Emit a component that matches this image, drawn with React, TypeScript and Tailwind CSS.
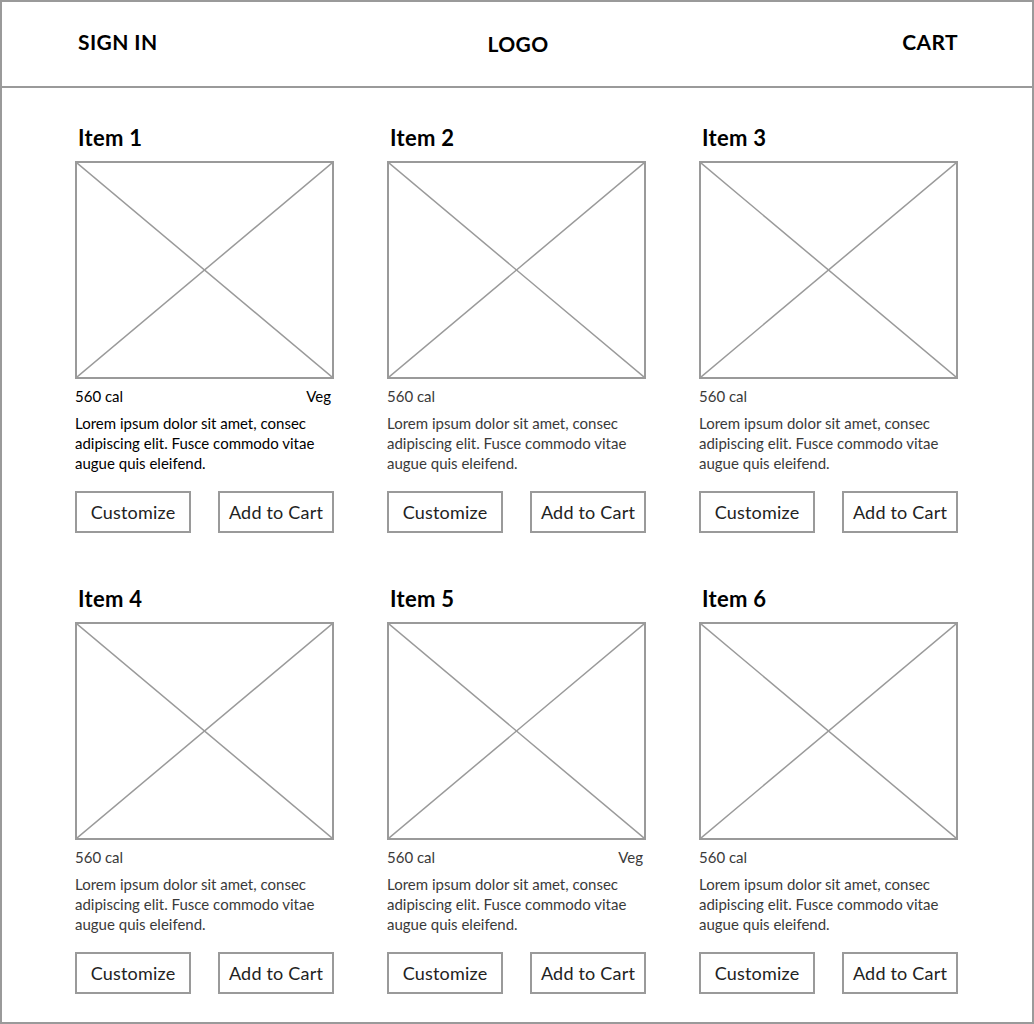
const items = [
  { name: "Item 1", veg: true, dark: true },
  { name: "Item 2", veg: false, dark: false },
  { name: "Item 3", veg: false, dark: false },
  { name: "Item 4", veg: false, dark: false },
  { name: "Item 5", veg: true, dark: false },
  { name: "Item 6", veg: false, dark: false },
];

const Placeholder = () => (
  <div className="relative h-[218px] w-[259px] border-2 border-[#9a9a9a]">
    <svg
      className="absolute inset-0 h-full w-full"
      viewBox="0 0 255 214"
      preserveAspectRatio="none"
    >
      <line x1="0" y1="0" x2="255" y2="214" stroke="#9a9a9a" strokeWidth="1.5" />
      <line x1="255" y1="0" x2="0" y2="214" stroke="#9a9a9a" strokeWidth="1.5" />
    </svg>
  </div>
);

const App = () => {
  return (
    <div
      className="h-[1024px] w-[1034px] border-2 border-[#9a9a9a] bg-white text-black"
      style={{ fontFamily: "Lato, 'Open Sans', sans-serif" }}
    >
      <header className="grid h-[86px] grid-cols-3 items-center border-b-2 border-[#9a9a9a] pb-[4px] pl-[76px] pr-[74px]">
        <span className="text-[21px] font-bold tracking-[0.4px]">SIGN IN</span>
        <span className="mt-[4px] text-center text-[21px] font-bold tracking-[0.4px]">LOGO</span>
        <span className="text-right text-[21px] font-bold tracking-[0.4px]">CART</span>
      </header>

      <div className="grid grid-cols-[259px_259px_259px] gap-x-[53px] gap-y-[52px] pl-[73px] pt-[36px]">
        {items.map((item) => (
          <div key={item.name} className="flex flex-col">
            <h3 className="mb-[9px] pl-[3px] text-[22px] leading-[28px] font-bold tracking-[0.3px]">
              {item.name}
            </h3>
            <Placeholder />
            <div
              className={`mt-[7px] flex justify-between text-[15px] leading-[20px] ${
                item.dark ? "text-black" : "text-[#3a3a3a]"
              }`}
            >
              <span>560 cal</span>
              {item.veg && <span className="pr-[3px]">Veg</span>}
            </div>
            <p
              className={`mt-[7px] text-[15px] leading-[20px] ${
                item.dark ? "text-black" : "text-[#3a3a3a]"
              }`}
            >
              Lorem ipsum dolor sit amet, consec adipiscing elit. Fusce commodo vitae augue
              quis eleifend.
            </p>
            <div className="mt-[18px] flex justify-between">
              <button className="h-[42px] w-[116px] border-2 border-[#9a9a9a] text-[18px] tracking-[0.2px] text-[#222]">
                Customize
              </button>
              <button className="h-[42px] w-[116px] border-2 border-[#9a9a9a] text-[18px] tracking-[0.2px] text-[#222]">
                Add to Cart
              </button>
            </div>
          </div>
        ))}
      </div>
    </div>
  );
};

export default App;
